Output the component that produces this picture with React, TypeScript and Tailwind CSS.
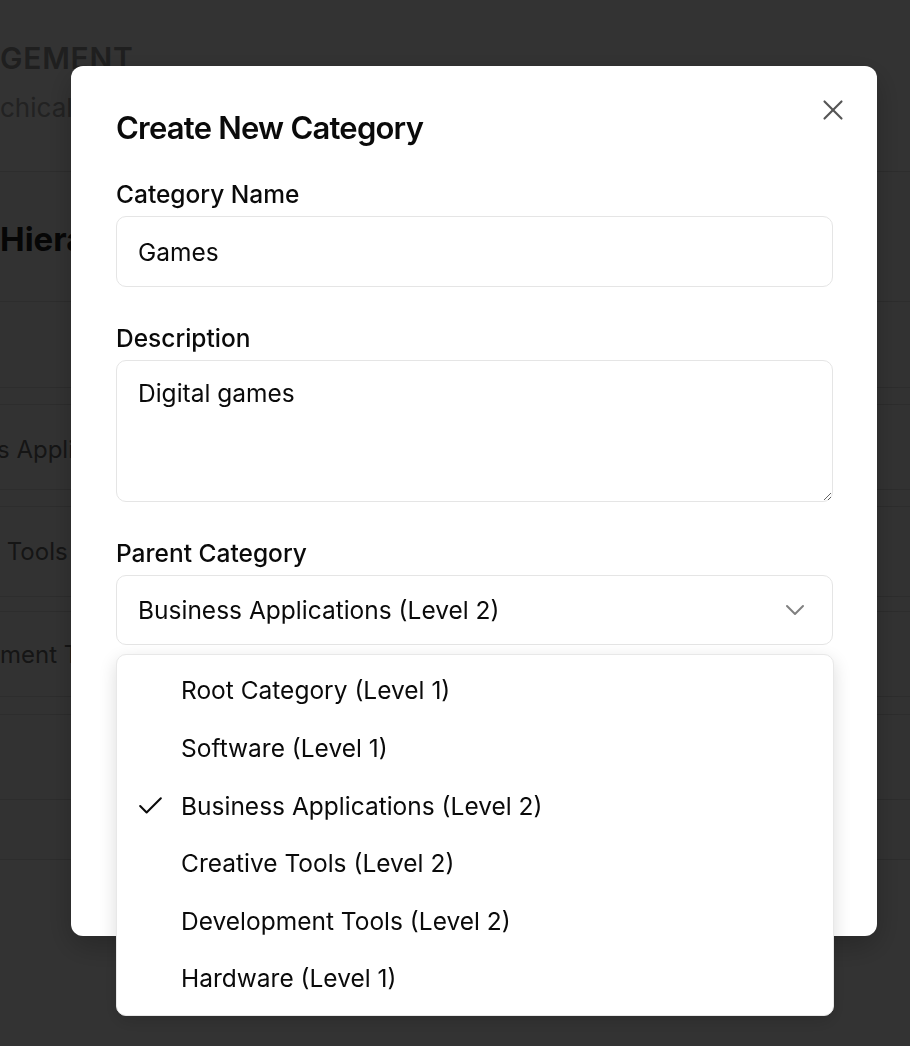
import { Check, ChevronDown, X } from 'lucide-react'

const parentOptions = [
  'Root Category (Level 1)',
  'Software (Level 1)',
  'Business Applications (Level 2)',
  'Creative Tools (Level 2)',
  'Development Tools (Level 2)',
  'Hardware (Level 1)',
]

const selected = 'Business Applications (Level 2)'

// text that runs off the left edge: the head span has no width and spills leftwards
function Clipped({ head, tail }: { head: string; tail: string }) {
  return (
    <div className="flex whitespace-pre">
      <span className="flex w-0 justify-end">{head}</span>
      <span>{tail}</span>
    </div>
  )
}

function BackgroundPage() {
  return (
    <div className="h-[1046px] overflow-hidden bg-white">
      <header className="h-[172px] border-b border-[#dedede] pt-[40px]">
        <div className="text-[30px] leading-[36px] font-semibold tracking-wide text-[#9a9a9a]">
          <Clipped head="CATEGORY MANA" tail="GEMENT" />
        </div>
        <div className="mt-[16px] text-[26px] leading-[32px] text-[#a8a8a8]">
          <Clipped head="Manage hierar" tail="chical product categories" />
        </div>
      </header>
      <div className="h-[688px] bg-[#fbfbfb]">
        <div className="flex h-[130px] items-center border-b border-[#dedede] pt-[6px] text-[33px] font-bold text-[#222]">
          <Clipped head="Category " tail="Hierarchy" />
        </div>
        <div className="h-[86px] border-b border-[#dedede]" />
        <div className="h-[17px] border-b border-[#dedede]" />
        <div className="flex h-[85px] items-center border-b border-[#dedede] pt-[6px] text-[24px] text-[#6b6b6b]">
          <div className="-ml-[3px]">
            <Clipped head="Busines" tail="s Applications" />
          </div>
        </div>
        <div className="h-[17px] border-b border-[#dedede]" />
        <div className="flex h-[90px] items-center border-b border-[#dedede] text-[24px] text-[#6b6b6b]">
          <Clipped head="Creative" tail=" Tools" />
        </div>
        <div className="h-[15px] border-b border-[#dedede]" />
        <div className="flex h-[85px] items-center border-b border-[#dedede] pt-[2px] text-[24px] text-[#6b6b6b]">
          <Clipped head="Develop" tail="ment Tools" />
        </div>
        <div className="h-[18px] border-b border-[#dedede]" />
        <div className="h-[85px] border-b border-[#dedede]" />
        <div className="h-[60px] border-b border-[#dedede]" />
      </div>
    </div>
  )
}

export default function App() {
  return (
    <div className="relative min-h-screen font-['Inter','Noto_Sans',sans-serif] text-[#0a0a0a]">
      <BackgroundPage />

      <div className="fixed inset-0 bg-black/80" />

      <div className="fixed left-[71px] top-[66px] flex h-[870px] w-[806px] flex-col rounded-xl bg-white pl-[45px] pr-[44px] pt-[44px] pb-[44px] shadow-[0_10px_30px_rgba(0,0,0,0.25)]">
        <button className="absolute right-[27px] top-[27px] text-[#555]">
          <X size={34} strokeWidth={1.5} />
        </button>

        <h2 className="text-[31px] leading-[36px] font-semibold tracking-tight">Create New Category</h2>

        <div className="mt-[33px] flex flex-col gap-[36px]">
          <div className="flex flex-col gap-[7px]">
            <label className="text-[24.5px] leading-[30px] font-medium">Category Name</label>
            <input
              defaultValue="Games"
              className="h-[71px] w-full rounded-[10px] border border-[#e5e5e5] px-[21px] text-[24.5px] outline-none"
            />
          </div>

          <div className="flex flex-col gap-[7px]">
            <label className="text-[24.5px] leading-[30px] font-medium">Description</label>
            <textarea
              defaultValue="Digital games"
              className="block h-[142px] w-full resize-y rounded-[10px] border border-[#e5e5e5] px-[21px] py-[14px] text-[24.5px] leading-[36px] outline-none"
            />
          </div>

          <div className="flex flex-col gap-[7px]">
            <label className="text-[24.5px] leading-[30px] font-medium">Parent Category</label>
            <div className="relative">
              <div className="flex h-[70px] w-full items-center justify-between rounded-[10px] border border-[#e5e5e5] pl-[21px] pr-[21px] text-[24.5px]">
                <span>{selected}</span>
                <ChevronDown size={32} strokeWidth={1.5} className="text-[#808080]" />
              </div>

              <div className="absolute left-0 right-[-1px] top-[79px] z-10 rounded-[10px] border border-[#e8e8e8] bg-white p-[7px] shadow-[0_6px_18px_rgba(0,0,0,0.14)]">
                {parentOptions.map((option) => (
                  <div key={option} className="relative flex h-[57.6px] items-center pl-[57px] text-[24.5px]">
                    {option === selected && (
                      <Check size={31} strokeWidth={1.6} className="absolute left-[11px] top-1/2 -translate-y-1/2" />
                    )}
                    {option}
                  </div>
                ))}
              </div>
            </div>
          </div>
        </div>

        {/* hidden under the open dropdown */}
        <div className="mt-auto flex justify-end gap-3">
          <button className="h-[60px] rounded-[10px] border border-[#e5e5e5] px-6 text-[22px]">Cancel</button>
          <button className="h-[60px] rounded-[10px] bg-[#171717] px-6 text-[22px] text-white">Create Category</button>
        </div>
      </div>
    </div>
  )
}
